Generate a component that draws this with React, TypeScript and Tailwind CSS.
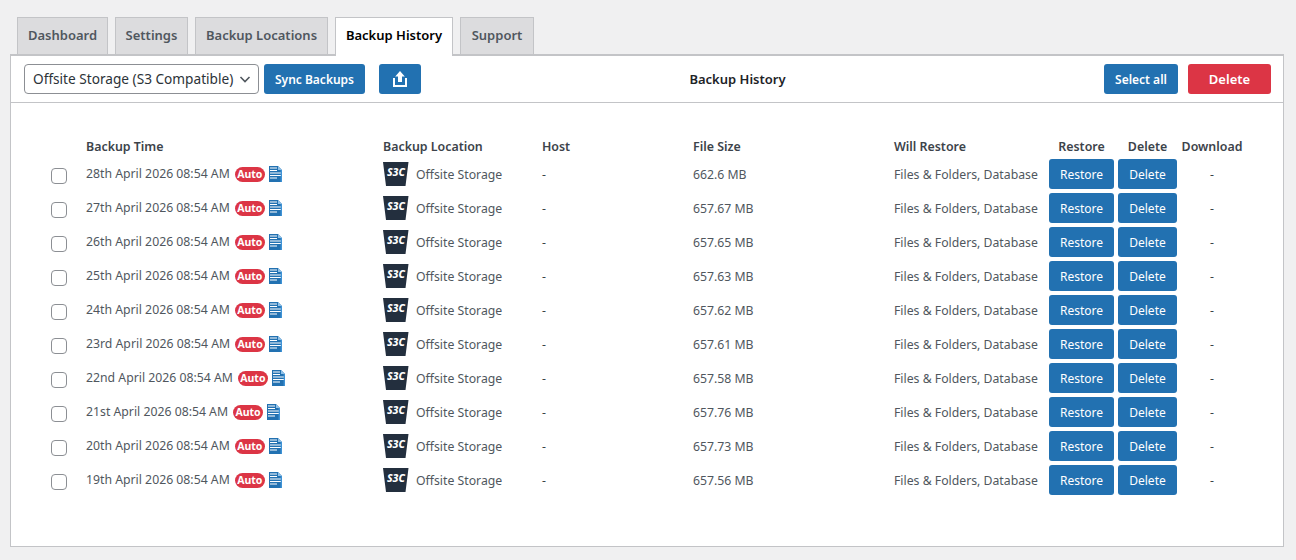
const font = '[font-family:"Noto_Sans","Open_Sans",sans-serif]';

const tabs = [
  { t: "Dashboard", w: "w-[91px]" },
  { t: "Settings", w: "w-[73px]" },
  { t: "Backup Locations", w: "w-[133px]" },
  { t: "Backup History", w: "w-[118px]" },
  { t: "Support", w: "w-[74px]" },
];
const rows = [
  ["28th April 2026 08:54 AM", "662.6 MB"],
  ["27th April 2026 08:54 AM", "657.67 MB"],
  ["26th April 2026 08:54 AM", "657.65 MB"],
  ["25th April 2026 08:54 AM", "657.63 MB"],
  ["24th April 2026 08:54 AM", "657.62 MB"],
  ["23rd April 2026 08:54 AM", "657.61 MB"],
  ["22nd April 2026 08:54 AM", "657.58 MB"],
  ["21st April 2026 08:54 AM", "657.76 MB"],
  ["20th April 2026 08:54 AM", "657.73 MB"],
  ["19th April 2026 08:54 AM", "657.56 MB"],
];

const cols = "grid grid-cols-[35px_297px_159px_151px_201px_155px_65px_4px_59px_70px]";

function DocIcon() {
  return (
    <svg width="13" height="16" viewBox="0 0 13 16" className="ml-[4px] shrink-0">
      <path d="M0 0H9L13 4V16H0Z" fill="#2271b1" />
      <path d="M9 0L13 4H9Z" fill="#8fc1e8" />
      <path d="M1 2H8M1 4.5H8M1 7H12M1 9.5H12M1 12H8" stroke="#fff" strokeWidth="1.1" />
      <path d="M12.2 4V16" stroke="#4ea3e6" strokeWidth="1" />
    </svg>
  );
}

function S3Icon() {
  return (
    <span className="relative flex h-[24px] w-[26px] shrink-0 items-center justify-center">
      <svg width="26" height="24" viewBox="0 0 26 24" className="absolute left-0 top-0">
        <path d="M0 0H25.5L22.5 24H3Z" fill="#232f3e" />
      </svg>
      <span className="relative -mt-[3px] text-[10.5px] font-extrabold italic leading-none text-white">S3C</span>
    </span>
  );
}

function UploadIcon() {
  return (
    <svg width="14" height="16" viewBox="0 0 14 16">
      <path d="M7 0L11.8 5.5H9V11H5V5.5H2.2Z" fill="#fff" />
      <path d="M1 7V15H13V7" fill="none" stroke="#fff" strokeWidth="2" />
    </svg>
  );
}

function Btn({ children, className = "" }: { children: React.ReactNode; className?: string }) {
  return (
    <button className={`flex h-[30px] items-center justify-center rounded-[3px] bg-[#2271b1] pt-[2px] text-[12px] text-white ${className}`}>
      {children}
    </button>
  );
}

export default function App() {
  return (
    <div className={`h-[560px] w-[1296px] overflow-hidden bg-[#f0f0f1] pt-[17px] ${font} text-[#3c434a]`}>
      <div className="flex gap-[7px] pl-[17px]">
        {tabs.map(({ t, w }) => {
          const active = t === "Backup History";
          return (
            <div
              key={t}
              className={`z-10 flex items-center justify-center border border-b-0 border-[#c3c4c7] text-[13px] font-semibold ${w} ${
                active ? "-mb-[2px] h-[39px] bg-white pb-[2px] text-black" : "h-[37px] bg-[#dcdcde] text-[#50575e]"
              }`}
            >
              {t}
            </div>
          );
        })}
      </div>
      <div className="ml-[10px] h-[493px] w-[1274px] border-x border-t-2 border-b border-[#c3c4c7] bg-white">
        <div className="flex h-[47px] items-center border-b border-[#c3c4c7] pl-[13px] pr-[12px]">
          <div className="flex h-[30px] w-[235px] items-center justify-between rounded-[4px] border border-[#8c8f94] bg-white pl-[8px] pr-[7px] text-[13.65px] text-[#2c3338]">
            <span className="pt-[1px]">Offsite Storage (S3 Compatible)</span>
            <svg width="12" height="12" viewBox="0 0 12 12">
              <path d="M1.5 4L6 8.5L10.5 4" fill="none" stroke="#50575e" strokeWidth="1.6" />
            </svg>
          </div>
          <Btn className="ml-[5px] w-[101px] font-semibold">Sync Backups</Btn>
          <Btn className="ml-[14px] w-[42px] !pt-0"><UploadIcon /></Btn>
          <div className="flex-1 pr-[50px] pt-[2px] text-center text-[13px] font-semibold text-[#1d2327]">Backup History</div>
          <Btn className="w-[74px] font-semibold">Select all</Btn>
          <Btn className="ml-[10px] w-[83px] !bg-[#dc3545] !text-[13px] font-semibold">Delete</Btn>
        </div>
        <div className="pl-[40px] pt-[32px]">
          <div className={`${cols} h-[22px] items-center pt-[2px] text-[12.4px] font-semibold`}>
            <div />
            <div>Backup Time</div>
            <div>Backup Location</div>
            <div>Host</div>
            <div>File Size</div>
            <div>Will Restore</div>
            <div className="text-center">Restore</div>
            <div />
            <div className="text-center">Delete</div>
            <div className="text-center">Download</div>
          </div>
          {rows.map(([time, size]) => (
            <div key={time} className={`${cols} h-[34px] items-center text-[12.25px]`}>
              <div className="pt-[3px]">
                <div className="h-[16px] w-[16px] rounded-[4px] border border-[#8c8f94] bg-white" />
              </div>
              <div className="flex items-center">
                <span className="text-[#50575e]">{time}</span>
                <span className="ml-[5px] mt-[1px] flex h-[15px] w-[30px] items-center justify-center rounded-full bg-[#dc3545] pt-[1px] text-[10.5px] font-bold text-white">Auto</span>
                <DocIcon />
              </div>
              <div className="flex items-center">
                <S3Icon />
                <span className="ml-[7px] pt-[2px] text-[#50575e]">Offsite Storage</span>
              </div>
              <div className="pt-[2px]">-</div>
              <div className="pt-[2px] text-[#50575e]">{size}</div>
              <div className="pt-[2px] text-[#50575e]">Files &amp; Folders, Database</div>
              <Btn>Restore</Btn>
              <div />
              <Btn>Delete</Btn>
              <div className="pt-[2px] text-center">-</div>
            </div>
          ))}
        </div>
      </div>
    </div>
  );
}
